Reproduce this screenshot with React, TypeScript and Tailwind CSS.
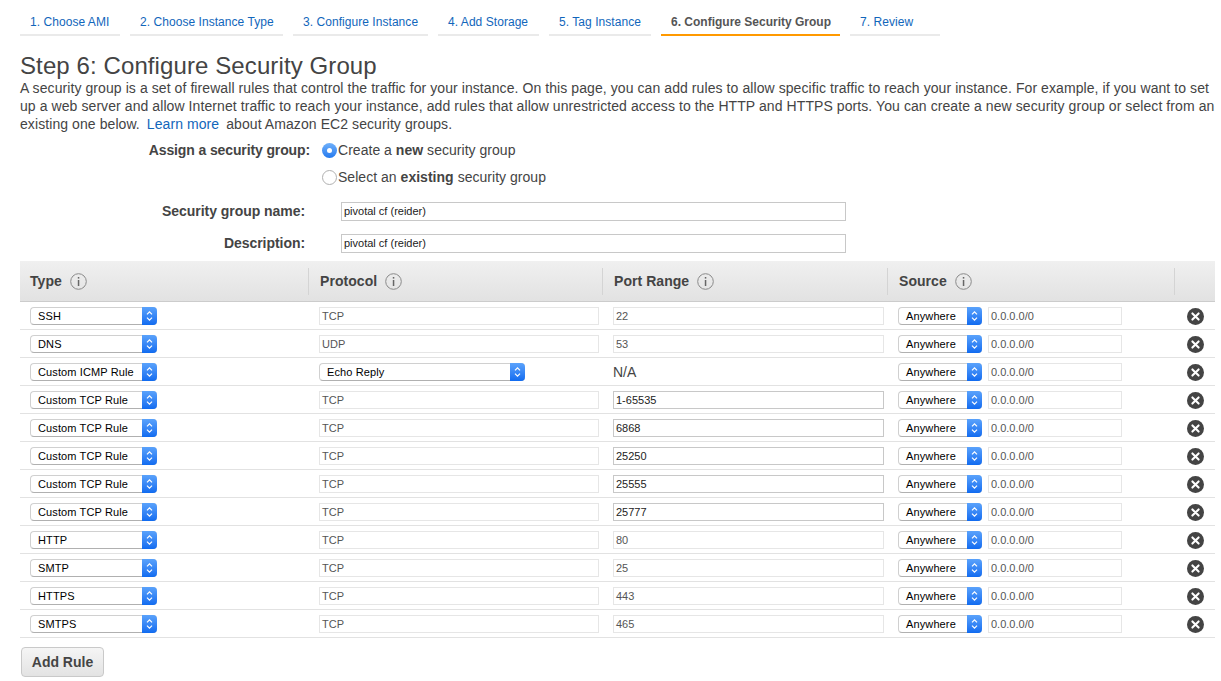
const tabs = [
  { label: "1. Choose AMI", width: "w-[100px]" },
  { label: "2. Choose Instance Type", width: "w-[153px]" },
  { label: "3. Configure Instance", width: "w-[135px]" },
  { label: "4. Add Storage", width: "w-[101px]" },
  { label: "5. Tag Instance", width: "w-[102px]" },
  { label: "6. Configure Security Group", width: "w-[179px]", active: true },
  { label: "7. Review", width: "w-[90px]" },
];

const rules = [
  { type: "SSH", protocol: "TCP", port: "22" },
  { type: "DNS", protocol: "UDP", port: "53" },
  { type: "Custom ICMP Rule", protocol: "Echo Reply", port: "N/A" },
  { type: "Custom TCP Rule", protocol: "TCP", port: "1-65535", editable: true },
  { type: "Custom TCP Rule", protocol: "TCP", port: "6868", editable: true },
  { type: "Custom TCP Rule", protocol: "TCP", port: "25250", editable: true },
  { type: "Custom TCP Rule", protocol: "TCP", port: "25555", editable: true },
  { type: "Custom TCP Rule", protocol: "TCP", port: "25777", editable: true },
  { type: "HTTP", protocol: "TCP", port: "80" },
  { type: "SMTP", protocol: "TCP", port: "25" },
  { type: "HTTPS", protocol: "TCP", port: "443" },
  { type: "SMTPS", protocol: "TCP", port: "465" },
];

function InfoIcon() {
  return (
    <svg width="17" height="17" viewBox="0 0 17 17" className="shrink-0">
      <circle cx="8.5" cy="8.5" r="7.8" fill="none" stroke="#8a8a8a" strokeWidth="1" />
      <rect x="7.8" y="7" width="1.5" height="6" fill="#666" />
      <rect x="7.8" y="4" width="1.5" height="1.6" fill="#666" />
    </svg>
  );
}

function RemoveIcon() {
  return (
    <svg width="17" height="17" viewBox="0 0 17 17">
      <circle cx="8.5" cy="8.5" r="8.5" fill="#444" />
      <path d="M5.4 5.4l6.2 6.2M11.6 5.4l-6.2 6.2" stroke="#fff" strokeWidth="2.1" strokeLinecap="round" />
    </svg>
  );
}

function Select({ value, width }: { value: string; width: string }) {
  return (
    <div className={`${width} h-[18px] flex rounded-[4px] border border-[#d0d0d0] border-b-[#b0b0b0] border-r-0 bg-white`}>
      <span className="flex-1 pl-[7px] text-[11px] tracking-[0.12px] leading-[16px] text-black whitespace-nowrap overflow-hidden">{value}</span>
      <span className="w-[15px] -my-px h-[18px] rounded-r-[4px] bg-gradient-to-b from-[#5aa2fb] to-[#0f6bf0] flex items-center justify-center">
        <svg width="7" height="12" viewBox="0 0 7 12" fill="none" stroke="#fff" strokeWidth="1.2">
          <path d="M1 4.4L3.5 1.8 6 4.4M1 7.6l2.5 2.6L6 7.6" />
        </svg>
      </span>
    </div>
  );
}

function TextBox({ value, width, editable }: { value: string; width: string; editable?: boolean }) {
  return (
    <div
      className={`${width} h-[18px] pl-[2px] border text-[11px] leading-[16px] whitespace-nowrap ${
        editable ? "border-[#c8c8c8] text-[#222]" : "border-[#e6e6e6] text-[#555]"
      }`}
    >
      {value}
    </div>
  );
}

function HeaderCell({ label, last, className }: { label?: string; last?: boolean; className?: string }) {
  return (
    <div className={`h-[27px] flex items-center gap-[8px] ${className ?? "pl-[10px]"} ${last ? "" : "border-r border-[#d4d4d4]"}`}>
      {label && <span className="text-[14px] font-bold tracking-[0.05px] text-[#444]">{label}</span>}
      {label && <InfoIcon />}
    </div>
  );
}

function Radio({ checked }: { checked?: boolean }) {
  return checked ? (
    <span className="w-[15px] h-[15px] mt-px rounded-full bg-gradient-to-b from-[#6fb0fa] to-[#2279ee] flex items-center justify-center shrink-0">
      <span className="w-[5px] h-[5px] rounded-full bg-white" />
    </span>
  ) : (
    <span className="w-[15px] h-[15px] mt-px rounded-full border border-[#b0b0b0] bg-white shrink-0" />
  );
}

export default function App() {
  return (
    <div className="w-[1221px] h-[681px] overflow-hidden bg-white text-[#444] font-['Liberation_Sans',Arial,sans-serif]">
      <div className="flex gap-[10px] pl-[20px] pt-[13px]">
        {tabs.map((tab) => (
          <div
            key={tab.label}
            className={`${tab.width} h-[23px] text-[12px] leading-[18px] pl-[10px] whitespace-nowrap border-b-2 ${
              tab.active ? "border-[#ff9900] font-bold text-[#555]" : "border-[#eaeaea] text-[#1166bb] tracking-[0.05px]"
            }`}
          >
            {tab.label}
          </div>
        ))}
      </div>

      <div className="px-[20px] pt-[16px]">
        <h1 className="text-[24px] leading-[28px] font-normal tracking-[0.1px] text-[#444]">Step 6: Configure Security Group</h1>
        <p className="text-[14px] leading-[18px] -mt-[1px] w-[1200px] tracking-[0.08px]">
          A security group is a set of firewall rules that control the traffic for your instance. On this page, you can add rules to allow specific traffic to reach your instance. For example, if you want to set up a web server and allow Internet traffic to reach your instance, add rules that allow unrestricted access to the HTTP and HTTPS ports. You can create a new security group or select from an existing one below.{" "}
          <span className="text-[#1166bb] mx-[3px]">Learn more</span> about Amazon EC2 security groups.
        </p>

        <div className="grid grid-cols-[290px_1fr] mt-[9px] text-[14px]">
          <div className="h-[27px] leading-[18px] -mt-px font-bold text-right tracking-[-0.12px]">Assign a security group:</div>
          <div className="h-[27px] flex items-start gap-[1px] pl-[12px] leading-[18px]">
            <Radio checked />
            <span className="-mt-px tracking-[0.03px]">Create a <b>new</b> security group</span>
          </div>
          <div className="h-[27px]" />
          <div className="h-[27px] flex items-start gap-[1px] pl-[12px] leading-[18px]">
            <Radio />
            <span className="-mt-px tracking-[0.03px]">Select an <b>existing</b> security group</span>
          </div>
        </div>

        <div className="grid grid-cols-[285px_505px] gap-x-[36px] gap-y-[13px] mt-[6px] text-[14px]">
          <div className="h-[19px] leading-[19px] font-bold text-right tracking-[-0.05px]">Security group name:</div>
          <div className="h-[19px] pl-[2px] border border-[#c8c8c8] text-[11px] leading-[17px] text-[#222]">pivotal cf (reider)</div>
          <div className="h-[19px] leading-[19px] font-bold text-right tracking-[-0.05px]">Description:</div>
          <div className="h-[19px] pl-[2px] border border-[#c8c8c8] text-[11px] leading-[17px] text-[#222]">pivotal cf (reider)</div>
        </div>

        <div className="mt-[8px] w-[1195px]">
          <div className="h-[41px] grid grid-cols-[289px_294px_285px_287px_40px] items-center border-b border-[#cccccc] bg-gradient-to-b from-[#f0f0f0] to-[#e2e2e2]">
            <HeaderCell label="Type" />
            <HeaderCell label="Protocol" className="pl-[11px]" />
            <HeaderCell label="Port Range" className="pl-[11px]" />
            <HeaderCell label="Source" className="pl-[11px]" />
            <HeaderCell last />
          </div>
          {rules.map((rule, i) => (
            <div key={i} className="h-[28px] grid grid-cols-[289px_294px_285px_287px_40px] items-center border-b border-[#e2e2e2]">
              <div className="pl-[10px]">
                <Select value={rule.type} width="w-[127px]" />
              </div>
              <div className="pl-[10px]">
                {rule.protocol === "Echo Reply" ? (
                  <Select value={rule.protocol} width="w-[206px]" />
                ) : (
                  <TextBox value={rule.protocol} width="w-[280px]" />
                )}
              </div>
              <div className="pl-[10px]">
                {rule.port === "N/A" ? (
                  <span className="text-[14px] text-[#444]">N/A</span>
                ) : (
                  <TextBox value={rule.port} width="w-[271px]" editable={rule.editable} />
                )}
              </div>
              <div className="pl-[10px] flex items-center gap-[6px]">
                <Select value="Anywhere" width="w-[84px]" />
                <TextBox value="0.0.0.0/0" width="w-[134px]" />
              </div>
              <div className="flex justify-center pt-[1px]">
                <RemoveIcon />
              </div>
            </div>
          ))}
        </div>

        <button className="mt-[9px] ml-[1px] w-[83px] h-[30px] rounded-[4px] border border-[#c9c9c9] bg-gradient-to-b from-[#f5f5f5] to-[#e3e3e3] text-[14px] font-bold text-[#444]">
          Add Rule
        </button>
      </div>
    </div>
  );
}
